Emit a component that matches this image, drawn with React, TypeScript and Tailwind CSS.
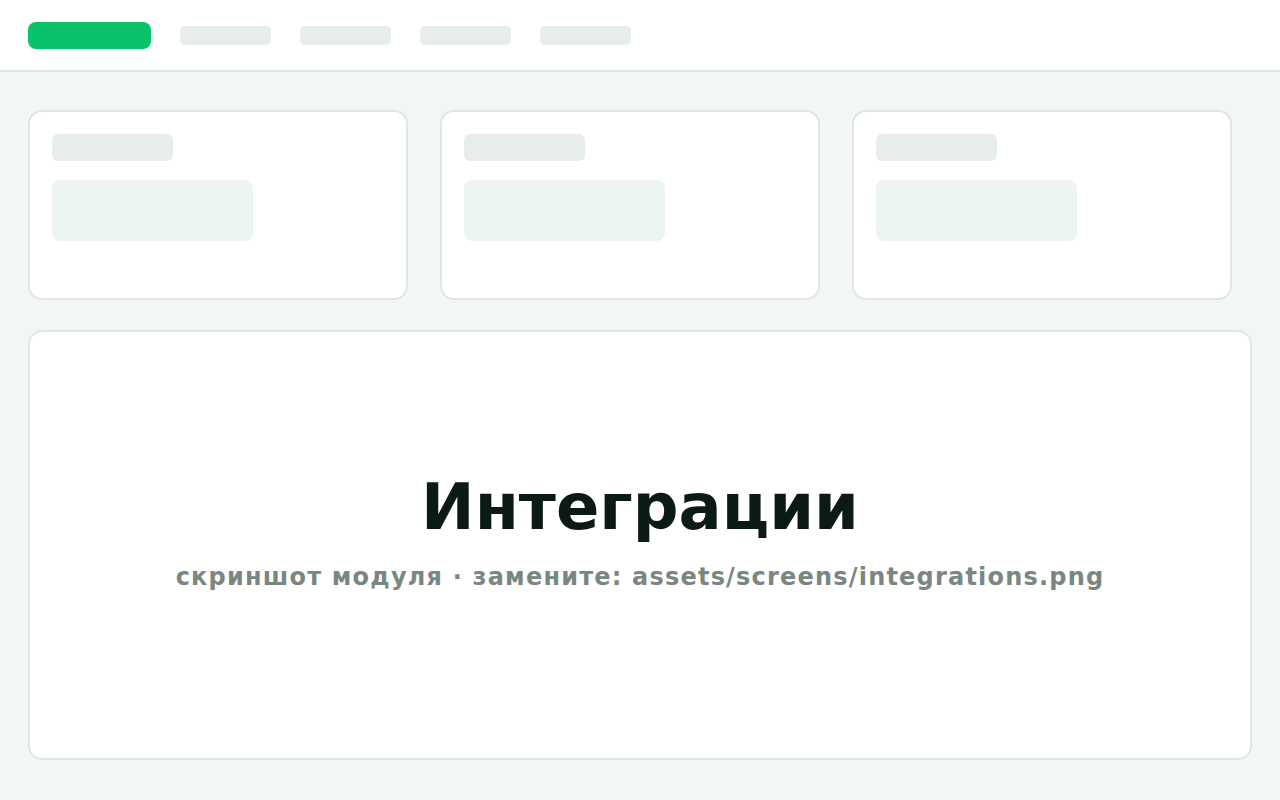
export default function App() {
  const cards = [0, 1, 2];
  const tabs = [0, 1, 2, 3];

  return (
    <div
      className="min-h-screen bg-[#f2f7f4] flex flex-col"
      style={{ fontFamily: '"DejaVu Sans", "Noto Sans", sans-serif' }}
    >
      {/* top bar */}
      <header className="h-[72px] bg-white border-b-2 border-[#dde5e1] flex items-center px-7 gap-[29px] shrink-0">
        <div className="w-[123px] h-[27px] rounded-lg bg-[#08c26a]" />
        {tabs.map((t) => (
          <div key={t} className="w-[91px] h-[19px] rounded-[5px] bg-[#e6edea]" />
        ))}
      </header>

      <main className="flex-1 flex flex-col px-7 pt-[38px] pb-10 gap-[30px]">
        <div className="grid grid-cols-[380px_380px_380px] gap-8">
          {cards.map((c) => (
            <div
              key={c}
              className="h-[190px] bg-white border-2 border-[#e0e7e3] rounded-[14px] p-[22px] flex flex-col"
            >
              <div className="w-[121px] h-[27px] rounded-md bg-[#e6edea]" />
              <div className="mt-[19px] w-[201px] h-[61px] rounded-lg bg-[#edf5f1]" />
            </div>
          ))}
        </div>

        <div className="h-[430px] bg-white border-2 border-[#e0e7e3] rounded-[14px] flex flex-col items-center justify-center pb-[26px]">
          <h1 className="text-[64px] leading-none font-bold text-[#0b1a14]">Интеграции</h1>
          <p className="mt-[26px] text-[24px] leading-none font-bold tracking-[1.2px] text-[#7a8781]">
            скриншот модуля · замените: assets/screens/integrations.png
          </p>
        </div>
      </main>
    </div>
  );
}
